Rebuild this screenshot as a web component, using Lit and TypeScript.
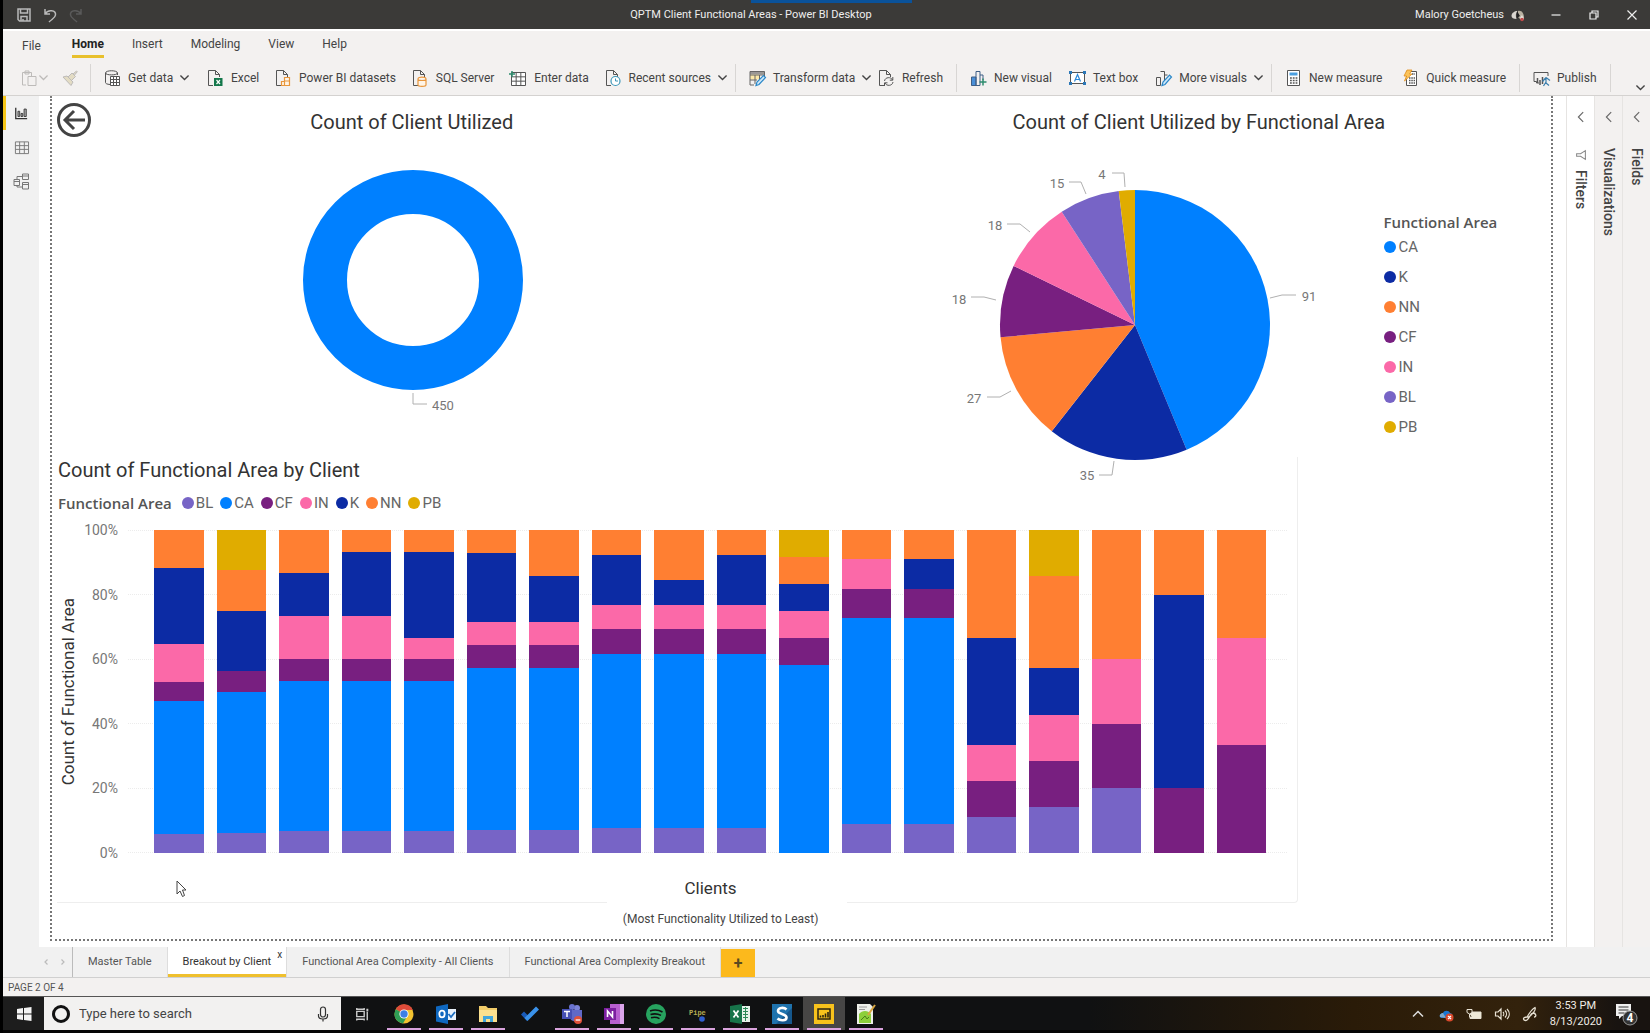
import { LitElement, html, css, svg, nothing } from "lit";
import { customElement, property } from "lit/decorators.js";

type Key = "BL" | "CA" | "CF" | "IN" | "K" | "NN" | "PB";

const COLORS: Record<Key, string> = {
  BL: "#7764c6",
  CA: "#0080ff",
  CF: "#781f80",
  IN: "#fb69a8",
  K: "#0c2ba4",
  NN: "#ff7f32",
  PB: "#e0ac00",
};

const STACK: Key[] = ["BL", "CA", "CF", "IN", "K", "NN", "PB"];

// One row per client, counts in the order of STACK.
const CLIENTS: number[][] = [
  [1, 7, 1, 2, 4, 2, 0],
  [1, 7, 1, 0, 3, 2, 2],
  [1, 7, 1, 2, 2, 2, 0],
  [1, 7, 1, 2, 3, 1, 0],
  [1, 7, 1, 1, 4, 1, 0],
  [1, 7, 1, 1, 3, 1, 0],
  [1, 7, 1, 1, 2, 2, 0],
  [1, 7, 1, 1, 2, 1, 0],
  [1, 7, 1, 1, 1, 2, 0],
  [1, 7, 1, 1, 2, 1, 0],
  [0, 7, 1, 1, 1, 1, 1],
  [1, 7, 1, 1, 0, 1, 0],
  [1, 7, 1, 0, 1, 1, 0],
  [1, 0, 1, 1, 3, 3, 0],
  [1, 0, 1, 1, 1, 2, 1],
  [1, 0, 1, 1, 0, 2, 0],
  [0, 0, 1, 0, 3, 1, 0],
  [0, 0, 1, 1, 0, 1, 0],
];

// Pie slices clockwise from twelve o'clock, with label anchor and leader line.
const PIE: { key: Key; n: number; x: number; y: number; line: string }[] = [
  { key: "CA", n: 91, x: 370, y: 167, line: "331,164 343,161 357,161" },
  { key: "K", n: 35, x: 148, y: 346, line: "160,341 173,341 175,327" },
  { key: "NN", n: 27, x: 35, y: 269, line: "48,263 61,263 72,257" },
  { key: "CF", n: 18, x: 20, y: 170, line: "32,163 45,163 57,166" },
  { key: "IN", n: 18, x: 56, y: 96, line: "68,90 81,90 91,98" },
  { key: "BL", n: 15, x: 118, y: 54, line: "130,48 142,48 147,60" },
  { key: "PB", n: 4, x: 163, y: 45, line: "173,39 185,39 186,53" },
];

const doc = svg`<path d="M6 15.5H1.5V.5h7l4 4V7M8.5 .5v4h4" fill="none" stroke="#555"/>`;
const grid = (x: number, y: number, w: number, h: number) => svg`
  <path d="M${x} ${y}h${w}v${h}h${-w}zM${x} ${y + h / 3}h${w}M${x} ${y + (2 * h) / 3}h${w}M${x + w / 3} ${y}v${h}M${x + (2 * w) / 3} ${y}v${h}"
    fill="#fff" stroke="#555"/>`;
const cyl = svg`<path d="M6 9c0-2.500 8-2.500 8 0v6c0 1.800-8 1.800-8 0zM6 9c0 2 8 2 8 0" fill="#fff4e6" stroke="#e8963c" stroke-width="1.200"/>`;

const ICONS: Record<string, unknown> = {
  save: svg`<path d="M2 2h12v12H3.500L2 12.500z" fill="none" stroke="#b9b9b9" stroke-width="1.500"/><path d="M4.500 2v4h7V2M5 14v-4.500h6V14M7 12v2" fill="none" stroke="#b9b9b9" stroke-width="1.500"/>`,
  undo: svg`<path d="M3 2v5h5M3 7c3-5 11-4 10.500 1C13.200 11 10 12 7 15" fill="none" stroke="#b9b9b9" stroke-width="1.500"/>`,
  redo: svg`<path d="M13 2v5H8M13 7C10 2 2 3 2.500 8 2.800 11 6 12 9 15" fill="none" stroke="#5a5a5a" stroke-width="1.500"/>`,
  paste: svg`<path d="M5 15H1.500V2.500h9V6M4 1h4v3H4zM7 6.500h8v9H7z" fill="none" stroke="#bdbbb9"/>`,
  brush: svg`<path d="M1 7l4-1 6 6-2 3.500zM6 7l4-4 3.500 3.500-4 4M11 4l3.500-3 .8.800L12.500 5" fill="#e3dcc4" stroke="#bdbbb9"/>`,
  getdata: svg`<path d="M6 14.500C3 14.300 1.500 13.500 1.500 12.500V3c0-3 12-3 12 0v2M1.500 3c0 2.500 12 2.500 12 0" fill="none" stroke="#555"/>${grid(6.5, 6.5, 9, 9)}`,
  excel: svg`${doc}<rect x="7" y="8" width="8.500" height="8" fill="#13774a"/><path d="M9.500 10l3.500 4m0-4l-3.500 4" stroke="#fff" stroke-width="1.200"/>`,
  pbi: svg`${doc}<path d="M6.500 11.500h3v4h-3zM9.500 7.500h5v8h-5zM9.500 11h5" fill="#fff4e6" stroke="#e8963c" stroke-width="1.200"/>`,
  sql: svg`${doc}${cyl}`,
  enter: svg`${grid(1.5, 2.5, 14, 13)}<path d="M2 1v6M-1 4h6" stroke="#2e8c6e" stroke-width="1.500"/>`,
  recent: svg`${doc}<circle cx="10.500" cy="11" r="4.500" fill="#fff" stroke="#3a96b8" stroke-width="1.200"/><path d="M10.500 8.500V11H13" fill="none" stroke="#3a96b8"/>`,
  transform: svg`<path d="M1 1.500h14.500v3H1z" fill="#9a9896"/><path d="M1 4.500h4.800v5H1zM5.800 4.500h5v5h-5z" fill="#fbe9a8"/><path d="M1 1.500h14.500V7M1 1.500V15h4M1 5h14M1 10h7M6 5v9M10.500 5v4" fill="none" stroke="#666"/><path d="M7 15.500l1-3.500 6.500-6.500 2 2L10 14.500z" fill="#cfe8fa" stroke="#2b88c8" stroke-width="1.200"/>`,
  refresh: svg`${doc}<path d="M6.500 11c.5-4 6.500-4.500 8-1M14.800 7v3.200h-3M15 12c-.5 4-6.500 4.500-8 1M6.500 16v-3.200h3" fill="none" stroke="#555"/>`,
  newvisual: svg`<rect x="1" y="7" width="5" height="8.500" fill="#4a90d9"/><path d="M1.500 7H6v8.500H1.500zM6 1.500h4v14H6zM10 5h3v5" fill="none" stroke="#3f5f86"/><path d="M13 8.500v7M9.500 12h7" stroke="#2e8c6e" stroke-width="1.500"/>`,
  textbox: svg`<path d="M1.500 2.500h14v11h-14z" fill="#fff" stroke="#555"/><path d="M0 1h3v3H0zM14 1h3v3h-3zM0 12h3v3H0zM14 12h3v3h-3z" fill="#2b78b8"/><path d="M5.500 11.500l3-7 3 7M6.500 9.500h4" fill="none" stroke="#2b88d8" stroke-width="1.200"/>`,
  morevisuals: svg`<path d="M1.500 7.500h4v8h-4zM5.500 1.500h4v10M9.500 5h3" fill="none" stroke="#555"/><path d="M7 15.500l1-3.500 6.500-7 2 2L10 14.500z" fill="#cfe8fa" stroke="#2b88c8" stroke-width="1.200"/>`,
  calc: svg`<path d="M2.500 .5h12v15h-12z" fill="#fff" stroke="#555"/><path d="M4.500 2.500h8v3h-8z" fill="#4a9fe0"/><path d="M5 8h7.500M5 10.500h7.500M5 13h7.500" stroke="#555" stroke-width="1.500" stroke-dasharray="1.800 1"/>`,
  quick: svg`<path d="M4.500 1.500h10v14h-10z" fill="#fff" stroke="#555"/><path d="M10 4h3M7 8h6M7 10.500h6M7 13h6" stroke="#555" stroke-width="1.500" stroke-dasharray="1.500 .800"/><path d="M5 0h5L7.500 4H10l-7.500 7L4.500 6H2z" fill="#fbc35a" stroke="#e08e1a" stroke-width=".800"/>`,
  publish: svg`<path d="M6 13H3.500v-1.500H1V2.500h14V6" fill="none" stroke="#555"/><path d="M4.500 8v5M7 10v5M9.500 7v7" stroke="#555" stroke-width="1.500"/><path d="M13 7.500l-3.500 4M13 7.500l4 3M13 7.500V13l3 2.500M13 12l-2.500 4" fill="none" stroke="#3a7fae" stroke-width="1.200"/>`,
  report: svg`<path d="M2 2v12.500h13" fill="none" stroke="#333" stroke-width="1.500"/><path d="M4.500 6h2v6h-2zM8 8.500h2V12H8zM11.500 3.500h2.500V12h-2.500z" fill="#aaa" stroke="#333"/>`,
  table: svg`<path d="M1.500 2h14v12.500h-14zM1.500 6h14M1.500 10h14M6 2v12.500M11 2v12.500" fill="none" stroke="#777"/>`,
  model: svg`<path d="M1 6.500h5.500v6H1zM9.500 1h6v5.500h-6zM9.500 9.500h6V16h-6zM1 8.500h5.500M9.500 3h6M9.500 11.500h6M4 6.500V3.500h5.500M4 12.500V14h5.500" fill="none" stroke="#777"/>`,
  chev: svg`<path d="M3 5.500l5 5 5-5" fill="none" stroke="#444" stroke-width="1.700"/>`,
  chevpale: svg`<path d="M3 5.500l5 5 5-5" fill="none" stroke="#bdbbb9" stroke-width="1.500"/>`,
  left: svg`<path d="M10.500 2.500L5 8l5.500 5.500" fill="none" stroke="#666" stroke-width="1.300"/>`,
  up: svg`<path d="M3 10.500L8 5.500l5 5" fill="none" stroke="#ddd" stroke-width="1.500"/>`,
  funnel: svg`<path d="M13 3v10L7.500 9.500H3v-3h4.500z" fill="none" stroke="#888" stroke-width="1.200"/>`,
  prev: svg`<path d="M9.500 5.500L7 8l2.500 2.500" fill="none" stroke="#bbb" stroke-width="1.200"/>`,
  next: svg`<path d="M6.500 5.500L9 8l-2.500 2.500" fill="none" stroke="#bbb" stroke-width="1.200"/>`,
  min: svg`<path d="M3.500 8h9" stroke="#eee" stroke-width="1.200"/>`,
  restore: svg`<path d="M4 6h6v6H4zM6 6V4h6v6h-2" fill="none" stroke="#eee" stroke-width="1.200"/>`,
  close: svg`<path d="M3.500 3.500l9 9m0-9l-9 9" stroke="#eee" stroke-width="1.200"/>`,
  avatar: svg`<path d="M1.500 9c0-3 3-5 6-5-2 2-2 5-1 8-3 0-5-1-5-3z" fill="#d9d6cf"/><path d="M8 4c4-1 6 3 6 7l-3 2-3-3z" fill="#b9b2a2"/><path d="M7 4l3 5-3 2z" fill="#222"/><path d="M10 11l2-3 2 4-2 2z" fill="#e8e4de"/><circle cx="12" cy="12.500" r="1.800" fill="#c04a4a"/>`,
  win: svg`<path d="M1 3l6-1v5.600H1zM8 1.900L15.500 1v6.600H8zM1 8.500h6V14l-6-.9zM8 8.500h7.500V15L8 14.100z" fill="#f4f4f4"/>`,
  mic: svg`<rect x="5.500" y="1" width="5" height="10" rx="2.500" fill="none" stroke="#333" stroke-width="1.200"/><path d="M3.500 8v2c0 4 9 4 9 0V8M8 13v2.500" fill="none" stroke="#333" stroke-width="1.200"/>`,
  taskview: svg`<path d="M2 5h8.500v6H2z" fill="none" stroke="#ccc" stroke-width="1.600"/><path d="M2 1v1.500h8.500V1M2 15.500V14h8.500v1.500M14 5.500V15" fill="none" stroke="#ccc" stroke-width="1.600"/><path d="M13 2h2.200v3H13z" fill="#ccc"/>`,
  cloud: svg`<path d="M2 11c-1-3 2-4 3-4 1-3 6-3 7 0 3 0 3 5 0 5H3z" fill="#1976d2"/><path d="M2 11c-1-3 2-4 3-4l3 5z" fill="#7fa9c9"/><circle cx="11.500" cy="11.500" r="4" fill="#d9482b"/><path d="M10 10l3 3m0-3l-3 3" stroke="#fff" stroke-width="1.200"/>`,
  battery: svg`<path d="M4 6h11v6.500H4z" fill="#f0ead8" stroke="#e8e2d4"/><path d="M1 3.500h5v3L3.500 8 1 6.500zM3.500 8v3H6" fill="#33240e" stroke="#e8e2d4"/>`,
  sound: svg`<path d="M1.500 6h2.500l3-3v10l-3-3H1.500z" fill="none" stroke="#e8e2d4" stroke-width="1.200"/><path d="M9 6c1 1 1 3 0 4M11 4.500c2 2 2 5 0 7M13 3c3 3 3 7 0 10" fill="none" stroke="#e8e2d4" stroke-width="1.200"/>`,
  pen: svg`<path d="M5 11c3-5 5-8 8-9.500 1 2-2 6-6 9.500zM5 11c-6 0-3 5 0 3 3-2 3-7 6-7s4 4 1 4" fill="none" stroke="#e8e2d4" stroke-width="1.300"/>`,
};

// Task bar programs, drawn on a 22 unit square.
const APPS: { name: string; running: boolean; active?: boolean; art: unknown }[] = [
  {
    name: "Google Chrome", running: true,
    art: svg`<circle cx="11" cy="11" r="9.500" fill="#f2c230"/><path d="M11 11L2.800 6.200A9.500 9.500 0 0 1 19.800 7H11z" fill="#dd4b3a"/><path d="M11 11L2.800 6.200A9.500 9.500 0 0 0 10 20.500l4-7z" fill="#2f9e55"/><circle cx="11" cy="11" r="4.600" fill="#fff"/><circle cx="11" cy="11" r="3.700" fill="#3d7fe6"/>`,
  },
  {
    name: "Outlook", running: true,
    art: svg`<path d="M12 6h9v11h-9z" fill="#e9f2fb"/><path d="M13.500 11l2.500 3 4-5" fill="none" stroke="#1c6dc0" stroke-width="1.800"/><path d="M1 3.500L13 1v20L1 18.500z" fill="#0f68c0"/><ellipse cx="7" cy="11" rx="2.700" ry="3.300" fill="none" stroke="#fff" stroke-width="1.800"/>`,
  },
  {
    name: "File Explorer", running: true,
    art: svg`<path d="M2 3h7l2 2h9v14H2z" fill="#f2cd6a"/><path d="M2 7h18v12H2z" fill="#fbe08f"/><path d="M6 19v-6h10v6h-3v-3H9v3z" fill="#41a5dc"/>`,
  },
  {
    name: "To Do", running: false,
    art: svg`<path d="M2 11.500L5 8.500 9.500 13 8 18z" fill="#195ab8"/><path d="M5.500 15L17 3.500l3 3L8.500 18z" fill="#3a92ea"/>`,
  },
  {
    name: "Teams", running: true,
    art: svg`<circle cx="16" cy="5" r="3" fill="#7b83d8"/><circle cx="11" cy="4" r="3" fill="#6a73cf"/><path d="M9 7h12v7c0 6-12 6-12 0z" fill="#6069c8"/><path d="M1 6h10v10H1z" fill="#4650b4"/><path d="M3 8.500h6M6 8.500V14" stroke="#fff" stroke-width="1.500"/><circle cx="17" cy="17" r="4" fill="#e0523c"/><path d="M14.700 17h4.600" stroke="#fff" stroke-width="1.300"/>`,
  },
  {
    name: "OneNote", running: true,
    art: svg`<path d="M7 1h14v20H7z" fill="#b85fd0"/><path d="M17 1h4v20h-4z" fill="#dba4ea"/><path d="M1 5h12v12H1z" fill="#7c1fa0"/><path d="M4.500 14V8l5 6V8" fill="none" stroke="#fff" stroke-width="1.600"/>`,
  },
  {
    name: "Spotify", running: true,
    art: svg`<circle cx="11" cy="11" r="10" fill="#27a35f"/><path d="M5 8c4-1.500 9-1 12.500 1M5.500 11.500c4-1.200 7.500-.7 10.500.9M6 14.800c3-.9 6-.6 8.500.8" fill="none" stroke="#111" stroke-width="1.600"/>`,
  },
  {
    name: "Pipe", running: true,
    art: svg`<text x="2" y="12" font-size="7" fill="#b5ab52" font-family="Liberation Mono, monospace" font-weight="700">Pipe</text><circle cx="15" cy="16" r="2.800" fill="#2f5fd0"/>`,
  },
  {
    name: "Excel", running: true,
    art: svg`<path d="M12 3h9v16h-9z" fill="#e6f2ea"/><path d="M14 5.500h5M14 8.500h5M14 11.500h5M14 14.500h5M16.500 4v14" stroke="#2b8a57"/><path d="M1 3l12-2v20L1 19z" fill="#17744a"/><path d="M4.500 7.500l5 7m0-7l-5 7" stroke="#fff" stroke-width="1.700"/>`,
  },
  {
    name: "Snagit", running: true,
    art: svg`<path d="M1 1h20v20H1z" fill="#1f73ad"/><path d="M21 5v16H5z" fill="#15578c"/><path d="M15.500 6.500C13 4 7 4.500 7 8s8.500 2.500 8.500 6.500c0 3.500-6.500 3.500-9 1" fill="none" stroke="#fff" stroke-width="2.600"/>`,
  },
  {
    name: "Power BI Desktop", running: true, active: true,
    art: svg`<path d="M1 1h20v20H1z" fill="#f8c21c"/><path d="M5 6h12v10H5z" fill="none" stroke="#2b2410" stroke-width="1.500"/><path d="M7.500 12.500v2M10 12v2.500M12.500 10.500v4M15 9v5.500" stroke="#2b2410" stroke-width="1.600"/>`,
  },
  {
    name: "Notepad++", running: true,
    art: svg`<path d="M2 1h13l3 3v17H2z" fill="#eef0ea"/><path d="M4 11c3-4 9-4 12 0v9H4z" fill="#8ccf3a"/><path d="M4 4h8M4 6.500h6" stroke="#9a9a9a"/><path d="M20 2l-7 10" stroke="#d9a640" stroke-width="2"/><path d="M6 17l4-4 2 3 2-2" fill="none" stroke="#4b7d1a"/>`,
  },
];

function icon(name: string, size = 16) {
  return html`<svg class="icon" width=${size} height=${size} viewBox="0 0 16 16" aria-hidden="true">${ICONS[name]}</svg>`;
}

const shared = css`
  :host {
    display: block;
    font-family: Roboto, "Open Sans", sans-serif;
  }
  * {
    box-sizing: border-box;
  }
  .icon {
    display: block;
    flex: none;
    overflow: visible;
  }
  button {
    font: inherit;
    color: inherit;
    border: 0;
    padding: 0;
    margin: 0;
    background: none;
    cursor: pointer;
  }
  h2,
  h3,
  p,
  ul {
    margin: 0;
    padding: 0;
    font-size: inherit;
    font-weight: 400;
    list-style: none;
  }
`;

@customElement("title-bar")
class TitleBar extends LitElement {
  static styles = [
    shared,
    css`
      .bar {
        position: relative;
        display: grid;
        grid-template-columns: minmax(0, 635fr) auto minmax(0, 788fr);
        align-items: center;
        height: 29px;
        background: #3b3a38;
        color: #eee;
        font-size: 11px;
      }
      .quick {
        display: flex;
        gap: 10px;
        padding-left: 13px;
      }
      .system {
        display: flex;
        align-items: center;
        justify-content: flex-end;
        gap: 22px;
        padding-right: 10px;
      }
      .user {
        display: flex;
        align-items: center;
        gap: 6px;
      }
      .peek {
        position: absolute;
        top: 0;
        left: calc(50% - 76px);
        width: 161px;
        height: 3px;
        background: #0a529a;
      }
    `,
  ];
  render() {
    return html`<header class="bar">
      <span class="peek"></span>
      <div class="quick">
        <button aria-label="Save">${icon("save")}</button>
        <button aria-label="Undo">${icon("undo")}</button>
        <button aria-label="Redo">${icon("redo")}</button>
      </div>
      <span>QPTM Client Functional Areas - Power BI Desktop</span>
      <div class="system">
        <button class="user">Malory Goetcheus ${icon("avatar")}</button>
        <button aria-label="Minimize">${icon("min")}</button>
        <button aria-label="Restore">${icon("restore")}</button>
        <button aria-label="Close">${icon("close")}</button>
      </div>
    </header>`;
  }
}

interface Command {
  icon: string;
  label: string;
  menu?: boolean;
}
const GROUPS: Command[][] = [
  [
    { icon: "getdata", label: "Get data", menu: true },
    { icon: "excel", label: "Excel" },
    { icon: "pbi", label: "Power BI datasets" },
    { icon: "sql", label: "SQL Server" },
    { icon: "enter", label: "Enter data" },
    { icon: "recent", label: "Recent sources", menu: true },
  ],
  [
    { icon: "transform", label: "Transform data", menu: true },
    { icon: "refresh", label: "Refresh" },
  ],
  [
    { icon: "newvisual", label: "New visual" },
    { icon: "textbox", label: "Text box" },
    { icon: "morevisuals", label: "More visuals", menu: true },
  ],
  [
    { icon: "calc", label: "New measure" },
    { icon: "quick", label: "Quick measure" },
  ],
  [{ icon: "publish", label: "Publish" }],
];

@customElement("ribbon-bar")
class RibbonBar extends LitElement {
  static styles = [
    shared,
    css`
      .ribbon {
        background: #f3f1f0;
        border-top: 2px solid #fff;
        border-bottom: 1px solid #d4d2d0;
        color: #444;
      }
      .tabs {
        display: flex;
        gap: 28px;
        height: 27px;
        padding: 0 19px;
        align-items: flex-end;
        font-size: 12px;
      }
      .tab {
        height: 25px;
        line-height: 18px;
        border-bottom: 3px solid transparent;
      }
      .file {
        height: 22px;
        margin-right: 3px;
      }
      .current {
        font-weight: 700;
        color: #222;
        border-bottom-color: #e8c02c;
      }
      .commands {
        display: grid;
        grid-template-columns: 88fr 645fr 221fr 315fr 248fr 91fr 39fr;
        align-items: center;
        height: 37px;
        padding-top: 2px;
        font-size: 12px;
      }
      .group {
        display: flex;
        justify-content: space-between;
        align-items: center;
        height: 28px;
        min-width: 0;
        padding: 0 6px 0 13px;
        border-right: 1px solid #d8d6d4;
      }
      .plain {
        padding-right: 13px;
      }
      .clip {
        padding: 0 12px 0 18px;
      }
      .cmd {
        display: flex;
        align-items: center;
        gap: 8px;
        white-space: nowrap;
      }
      .cmd .icon + .text + .icon {
        margin-left: -3px;
      }
      .pair {
        display: flex;
        align-items: center;
      }
      .more {
        display: flex;
        justify-content: flex-end;
        align-items: flex-end;
        height: 32px;
        padding-right: 3px;
      }
    `,
  ];
  render() {
    return html`<nav class="ribbon">
      <div class="tabs">
        <button class="tab file">File</button>
        <button class="tab current">Home</button>
        <button class="tab">Insert</button>
        <button class="tab">Modeling</button>
        <button class="tab">View</button>
        <button class="tab">Help</button>
      </div>
      <div class="commands">
        <div class="group clip">
          <button class="pair" aria-label="Paste">${icon("paste")}${icon("chevpale", 13)}</button>
          <button aria-label="Format painter">${icon("brush")}</button>
        </div>
        ${GROUPS.map(
          (items) => html`<div class="group ${items[items.length - 1].menu ? "" : "plain"}">
            ${items.map(
              (c) => html`<button class="cmd">
                ${icon(c.icon)}<span class="text">${c.label}</span>${c.menu ? icon("chev", 13) : nothing}
              </button>`
            )}
          </div>`
        )}
        <div class="more"><button aria-label="Collapse ribbon">${icon("chev", 13)}</button></div>
      </div>
    </nav>`;
  }
}

@customElement("donut-chart")
class DonutChart extends LitElement {
  static styles = [
    shared,
    css`
      .chart {
        display: block;
        margin: 0 auto;
        overflow: visible;
      }
      .label {
        font-size: 13px;
        fill: #777;
      }
    `,
  ];
  render() {
    return html`<svg class="chart" width="240" height="290" viewBox="0 0 240 290" role="img" aria-label="Count of Client Utilized">
      <circle cx="121" cy="146" r="88" fill="none" stroke=${COLORS.CA} stroke-width="44" />
      <path d="M121 259v11h14" fill="none" stroke="#b0b0b0" />
      <text class="label" x="140" y="276">450</text>
    </svg>`;
  }
}

@customElement("pie-chart")
class PieChart extends LitElement {
  static styles = [
    shared,
    css`
      .chart {
        display: block;
        overflow: visible;
      }
      .label {
        font-size: 13px;
        fill: #777;
        text-anchor: middle;
      }
    `,
  ];
  render() {
    const total = PIE.reduce((s, p) => s + p.n, 0);
    const r = 135;
    let at = 0;
    const point = (v: number) => {
      const a = (v / total) * 2 * Math.PI;
      return `${196 + r * Math.sin(a)} ${191 - r * Math.cos(a)}`;
    };
    return html`<svg class="chart" width="390" height="323" viewBox="0 0 390 323" role="img" aria-label="Count of Client Utilized by Functional Area">
      ${PIE.map((p) => {
        const from = at;
        at += p.n;
        return svg`<path d="M196 191L${point(from)}A${r} ${r} 0 0 1 ${point(at)}z" fill=${COLORS[p.key]} />
          <polyline points=${p.line} fill="none" stroke="#b0b0b0" />
          <text class="label" x=${p.x} y=${p.y}>${p.n}</text>`;
      })}
    </svg>`;
  }
}

@customElement("area-legend")
class AreaLegend extends LitElement {
  @property({ type: Boolean }) vertical = false;
  @property({ attribute: false }) keys: Key[] = [];
  static styles = [
    shared,
    css`
      .legend {
        display: flex;
        align-items: center;
        gap: 10px;
        font-size: 15px;
        line-height: 20px;
        color: #666;
      }
      .name {
        font-family: "Open Sans", sans-serif;
        font-weight: 600;
        color: #555;
      }
      .items {
        display: flex;
        gap: 7px;
      }
      .item {
        display: flex;
        align-items: center;
        gap: 2px;
      }
      .dot {
        width: 12px;
        height: 12px;
        border-radius: 50%;
      }
      .vertical {
        display: block;
      }
      .vertical .items {
        display: block;
      }
      .vertical .item {
        height: 30px;
        padding-left: 1px;
      }
    `,
  ];
  render() {
    return html`<div class="legend ${this.vertical ? "vertical" : ""}">
      <h3 class="name">Functional Area</h3>
      <ul class="items">
        ${this.keys.map(
          (k) => html`<li class="item"><span class="dot" style="background:${COLORS[k]}"></span>${k}</li>`
        )}
      </ul>
    </div>`;
  }
}

@customElement("stacked-bars")
class StackedBars extends LitElement {
  static styles = [
    shared,
    css`
      .body {
        display: flex;
        height: 323px;
      }
      .axis {
        width: 20px;
        display: flex;
        align-items: center;
        justify-content: center;
        font-size: 17px;
        line-height: 20px;
        color: #333;
      }
      .axis span {
        writing-mode: vertical-rl;
        transform: rotate(180deg);
        white-space: nowrap;
      }
      .ticks {
        width: 40px;
        margin: -10px 0;
        display: flex;
        flex-direction: column;
        justify-content: space-between;
        align-items: flex-end;
        font-size: 14px;
        line-height: 20px;
        color: #777;
      }
      .plot {
        position: relative;
        flex: 1;
        margin-left: 10px;
        padding: 0 31px 0 26px;
      }
      .lines {
        position: absolute;
        inset: 0 10px 0 0;
        display: flex;
        flex-direction: column;
        justify-content: space-between;
      }
      .line {
        border-top: 1px dotted #ececec;
      }
      .bars {
        position: relative;
        display: flex;
        gap: 13px;
        height: 100%;
      }
      .bar {
        flex: 1;
        display: flex;
        flex-direction: column-reverse;
      }
    `,
  ];
  render() {
    const ticks = [100, 80, 60, 40, 20, 0];
    return html`<div class="body">
      <div class="axis"><span>Count of Functional Area</span></div>
      <div class="ticks">${ticks.map((t) => html`<span>${t}%</span>`)}</div>
      <div class="plot">
        <div class="lines">${ticks.map(() => html`<div class="line"></div>`)}</div>
        <div class="bars">
          ${CLIENTS.map(
            (row) => html`<div class="bar">
              ${row.map((n, i) => (n ? html`<div style="flex:${n} 1 0;background:${COLORS[STACK[i]]}"></div>` : nothing))}
            </div>`
          )}
        </div>
      </div>
    </div>`;
  }
}

@customElement("report-page")
class ReportPage extends LitElement {
  static styles = [
    shared,
    css`
      :host {
        flex: 1;
        min-width: 0;
        display: flex;
        background: #fff;
        padding: 0 13px 6px 11px;
      }
      .page {
        position: relative;
        flex: 1;
        min-width: 0;
        border: 2px dotted #777;
        border-top: 0;
        padding: 14px 0 10px;
      }
      .top {
        display: flex;
        justify-content: space-between;
      }
      .title {
        font-size: 20px;
        line-height: 24px;
        color: #333;
      }
      .donut {
        width: 48%;
        text-align: center;
      }
      .pie {
        width: 47%;
      }
      .pie .title {
        text-align: center;
      }
      .row {
        display: flex;
        padding-left: 93px;
        gap: 54px;
      }
      .legend {
        padding-top: 78px;
      }
      .back {
        position: absolute;
        left: 5px;
        top: 6px;
      }
      .back svg {
        display: block;
      }
      .card {
        width: calc(83% - 3px);
        margin-left: 5px;
        padding: 1px 0 2px 1px;
        border: 1px solid #eee;
        border-width: 0 1px 1px 0;
        border-radius: 0 0 4px 0;
      }
      .keys {
        display: block;
        margin: 11px 0 17px;
      }
      .xaxis {
        font-size: 17px;
        line-height: 24px;
        color: #333;
        text-align: center;
        padding: 23px 0 0 66px;
      }
      .note {
        position: relative;
        width: 240px;
        margin: -3px 0 0 37%;
        padding: 9px 12px 0 0;
        background: #fff;
        color: #444;
        font-size: 12px;
        line-height: 20px;
        text-align: center;
        white-space: nowrap;
      }
      .cursor {
        position: absolute;
        left: 124px;
        bottom: 41px;
      }
    `,
  ];
  render() {
    return html`<main class="page">
      <button class="back" aria-label="Back">
        <svg width="34" height="36" viewBox="0 0 34 36">
          <circle cx="17" cy="18" r="15.500" fill="none" stroke="#444" stroke-width="3" />
          <path d="M28 18H9M17 9l-9 9 9 9" fill="none" stroke="#444" stroke-width="3" />
        </svg>
      </button>
      <div class="top">
        <section class="donut">
          <h2 class="title">Count of Client Utilized</h2>
          <donut-chart></donut-chart>
        </section>
        <section class="pie">
          <h2 class="title">Count of Client Utilized by Functional Area</h2>
          <div class="row">
            <pie-chart></pie-chart>
            <area-legend class="legend" vertical .keys=${PIE.map((p) => p.key)}></area-legend>
          </div>
        </section>
      </div>
      <section class="card">
        <h2 class="title">Count of Functional Area by Client</h2>
        <area-legend class="keys" .keys=${STACK}></area-legend>
        <stacked-bars></stacked-bars>
        <p class="xaxis">Clients</p>
      </section>
      <p class="note">(Most Functionality Utilized to Least)</p>
      <svg class="cursor" width="12" height="18" viewBox="0 0 12 18" aria-hidden="true">
        <path d="M1 1v13l3-3 2.500 5.500 2-1L6.500 10H10z" fill="#fff" stroke="#444" />
      </svg>
    </main>`;
  }
}

@customElement("side-pane")
class SidePane extends LitElement {
  @property() label = "";
  @property({ type: Boolean }) filter = false;
  static styles = [
    shared,
    css`
      :host {
        width: 28px;
        border-left: 1px solid #e6e4e2;
        background: #f3f1f0;
      }
      .pane {
        display: flex;
        flex-direction: column;
        align-items: center;
        padding-top: 14px;
        color: #444;
        font-size: 14px;
        font-weight: 500;
      }
      .text {
        writing-mode: vertical-rl;
        line-height: 18px;
        margin-top: 24px;
      }
      .filter {
        padding-top: 24px;
      }
      .filter + .text {
        margin-top: 8px;
      }
    `,
  ];
  render() {
    return html`<div class="pane">
      <button aria-label="Expand ${this.label}">${icon("left", 14)}</button>
      ${this.filter ? html`<span class="filter">${icon("funnel", 14)}</span>` : nothing}
      <span class="text">${this.label}</span>
    </div>`;
  }
}

@customElement("page-tabs")
class PageTabs extends LitElement {
  static styles = [
    shared,
    css`
      .tabs {
        display: flex;
        height: 31px;
        background: #f1f1f1;
        border-bottom: 1px solid #d0d0d0;
        color: #555;
        font-size: 11px;
      }
      .arrows {
        display: flex;
        align-items: center;
        gap: 1px;
        padding: 0 1px 0 35px;
        border-right: 1px solid #bbb;
      }
      .tab {
        position: relative;
        padding: 0 15px 2px;
        border-right: 1px solid #ddd;
      }
      .current {
        background: #fff;
        color: #333;
        box-shadow: inset 0 -3px #efc02e;
      }
      .shut {
        position: absolute;
        right: 4px;
        top: 2px;
        font-size: 10px;
      }
      .add {
        width: 34px;
        margin: 2px 0 0;
        background: #fcb91c;
        color: #5a4a20;
        font-size: 16px;
        font-weight: 700;
      }
      .status {
        height: 18px;
        padding-left: 5px;
        background: #f3f1f0;
        color: #555;
        font-size: 10px;
        line-height: 19px;
      }
    `,
  ];
  render() {
    return html`<nav class="tabs">
        <div class="arrows">
          <button aria-label="Previous page">${icon("prev")}</button>
          <button aria-label="Next page">${icon("next")}</button>
        </div>
        <button class="tab">Master Table</button>
        <button class="tab current">Breakout by Client<span class="shut">x</span></button>
        <button class="tab">Functional Area Complexity - All Clients</button>
        <button class="tab">Functional Area Complexity Breakout</button>
        <button class="add" aria-label="New page">+</button>
      </nav>
      <footer class="status">PAGE 2 OF 4</footer>`;
  }
}

@customElement("task-bar")
class TaskBar extends LitElement {
  static styles = [
    shared,
    css`
      .bar {
        display: flex;
        height: 38px;
        border-top: 1px solid #555;
        border-bottom: 4px solid #050505;
        background: linear-gradient(90deg, #101112 0 66%, #2a1b08 82%, #33220c 92%, #181310 98%);
        color: #f0ece6;
      }
      .start {
        width: 41px;
        display: grid;
        place-items: center;
        background: #1d1d1d;
      }
      .search {
        width: 297px;
        display: flex;
        align-items: center;
        gap: 9px;
        padding: 0 10px 0 8px;
        background: #f2f1f0;
      }
      .ring {
        flex: none;
        width: 18px;
        height: 18px;
        border: 3px solid #111;
        border-radius: 50%;
      }
      .field {
        flex: 1;
        min-width: 0;
        border: 0;
        padding: 0;
        background: none;
        outline: 0;
        font: inherit;
        font-size: 13px;
        line-height: 20px;
        color: #444;
      }
      .field::placeholder {
        color: #444;
        opacity: 1;
      }
      .app {
        width: 42px;
        display: grid;
        place-items: center;
      }
      .running {
        background: linear-gradient(#d9a3dd, #d9a3dd) center bottom / 34px 2px no-repeat;
      }
      .active {
        background-color: #474645;
      }
      .tray {
        margin-left: auto;
        display: flex;
        align-items: center;
        gap: 12px;
        padding-right: 12px;
      }
      .clock {
        font-size: 11px;
        line-height: 16px;
        text-align: center;
      }
      .bell {
        display: block;
      }
      .note {
        font-size: 12px;
        font-weight: 700;
      }
    `,
  ];
  render() {
    return html`<footer class="bar">
      <button class="start" aria-label="Start">${icon("win")}</button>
      <label class="search">
        <span class="ring"></span>
        <input class="field" type="text" placeholder="Type here to search" aria-label="Type here to search" />
        ${icon("mic")}
      </label>
      <button class="app" aria-label="Task view">${icon("taskview", 14)}</button>
      ${APPS.map(
        (a) => html`<button class="app ${a.running ? "running" : ""} ${a.active ? "active" : ""}" aria-label=${a.name}>
          <svg width="22" height="22" viewBox="0 0 22 22">${a.art}</svg>
        </button>`
      )}
      <div class="tray">
        <button aria-label="Hidden icons">${icon("up")}</button>
        <button aria-label="OneDrive">${icon("cloud")}</button>
        <button aria-label="Battery">${icon("battery")}</button>
        <button aria-label="Volume">${icon("sound")}</button>
        <button aria-label="Pen">${icon("pen")}</button>
        <div class="clock">3:53 PM<br />8/13/2020</div>
        <button aria-label="Notifications">
          <svg class="bell" width="24" height="26" viewBox="0 0 24 26">
            <path d="M2 3h15v12H8l-3 3v-3H2z" fill="#f0f0f0" />
            <path d="M4.500 6h10M4.500 9h10M4.500 12h6" stroke="#333" />
            <circle cx="16" cy="17" r="7" fill="#333" stroke="#999" />
            <text class="note" x="16" y="21" text-anchor="middle" fill="#fff">4</text>
          </svg>
        </button>
      </div>
    </footer>`;
  }
}

@customElement("app-root")
class AppRoot extends LitElement {
  static styles = [
    shared,
    css`
      .window {
        display: flex;
        flex-direction: column;
        min-height: 100vh;
        border-left: 3px solid #000;
        background: #f1f1f1;
      }
      .work {
        flex: 1;
        display: flex;
      }
      .views {
        width: 36px;
        background: #f1f1f1;
      }
      .view {
        display: grid;
        place-items: center;
        width: 36px;
        height: 34px;
        border-left: 3px solid transparent;
        padding-right: 3px;
      }
      .on {
        border-left-color: #f5c518;
      }
      .filters {
        background: #fff;
      }
    `,
  ];
  render() {
    return html`<div class="window">
      <title-bar></title-bar>
      <ribbon-bar></ribbon-bar>
      <div class="work">
        <nav class="views">
          <button class="view on" aria-label="Report">${icon("report", 14)}</button>
          <button class="view" aria-label="Data">${icon("table", 15)}</button>
          <button class="view" aria-label="Model">${icon("model")}</button>
        </nav>
        <report-page></report-page>
        <side-pane class="filters" label="Filters" filter></side-pane>
        <side-pane label="Visualizations"></side-pane>
        <side-pane label="Fields"></side-pane>
      </div>
      <page-tabs></page-tabs>
      <task-bar></task-bar>
    </div>`;
  }
}
